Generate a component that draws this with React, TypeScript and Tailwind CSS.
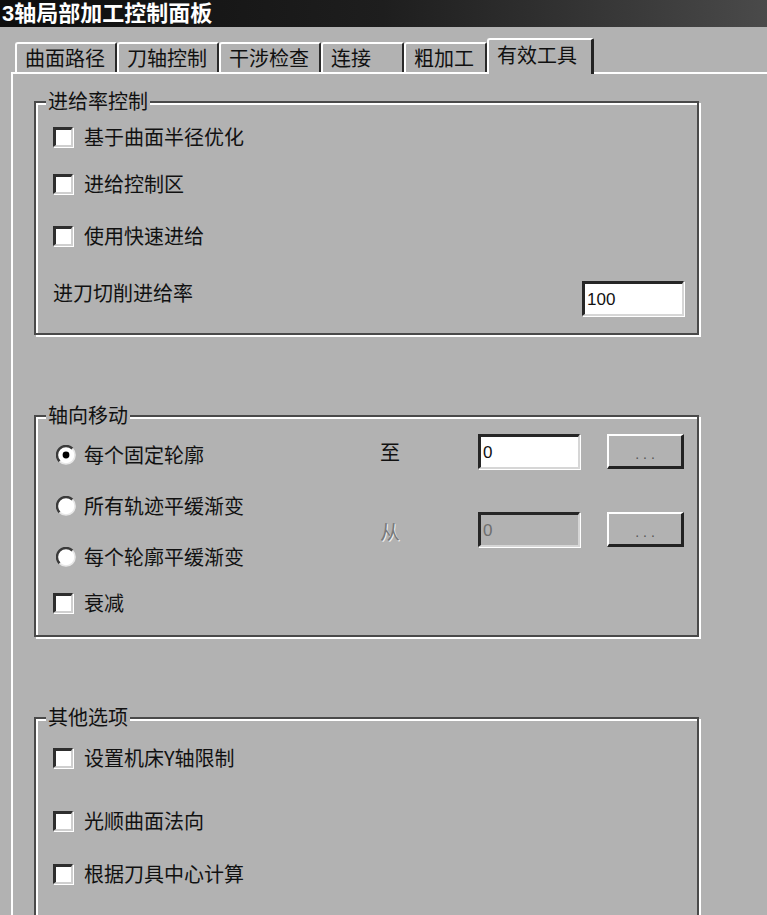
import React from "react";

const CJK = { fontFamily: '"Noto Sans CJK SC", "Noto Sans CJK JP", sans-serif' };
const TITLE = { fontFamily: '"Liberation Sans", "Noto Sans CJK SC", sans-serif' };
const MONO = { fontFamily: '"Liberation Sans", Arial, sans-serif' };

function Checkbox() {
  return (
    <span className="block w-[20px] h-[20px] shrink-0 bg-white border-t-[3px] border-l-[3px] border-t-[#2e2e2e] border-l-[#2e2e2e] border-r-2 border-b-2 border-r-[#cfcfcf] border-b-[#cfcfcf] shadow-[1px_1px_0_#ffffff]" />
  );
}

function Radio({ checked }: { checked?: boolean }) {
  return (
    <svg width="20" height="20" viewBox="0 0 20 20" className="shrink-0">
      <circle cx="10" cy="10" r="9" fill="#ffffff" />
      <path d="M3.6 16.4 A9 9 0 0 1 16.4 3.6" fill="none" stroke="#3a3a3a" strokeWidth="2.4" />
      <path d="M16.4 3.6 A9 9 0 0 1 3.6 16.4" fill="none" stroke="#e8e8e8" strokeWidth="1.6" />
      {checked && <circle cx="10" cy="10" r="3.4" fill="#000000" />}
    </svg>
  );
}

function CheckRow({ label, className = "" }: { label: string; className?: string }) {
  return (
    <div className={"flex items-center h-[24px] " + className}>
      <Checkbox />
      <span className="ml-[11px] text-[20px] leading-[24px] text-[#111] whitespace-nowrap">{label}</span>
    </div>
  );
}

function RadioRow({ label, checked, className = "" }: { label: string; checked?: boolean; className?: string }) {
  return (
    <div className={"flex items-center h-[24px] " + className}>
      <span className="ml-[3px]">
        <Radio checked={checked} />
      </span>
      <span className="ml-[8px] text-[20px] leading-[24px] text-[#111] whitespace-nowrap">{label}</span>
    </div>
  );
}

function Group({ title, children, className = "" }: { title: string; children: React.ReactNode; className?: string }) {
  return (
    <div
      className={
        "relative w-[665px] border-2 border-[#4a4a4a] shadow-[inset_2px_2px_0_#ffffff,2px_2px_0_#ffffff] " + className
      }
    >
      <span className="absolute left-[10px] -top-[14px] px-[2px] bg-[#b2b2b2] text-[20px] leading-[24px] text-[#111] whitespace-nowrap">
        {title}
      </span>
      {children}
    </div>
  );
}

function TextBox({ value, disabled }: { value: string; disabled?: boolean }) {
  return (
    <div
      className={
        "w-[102px] h-[35px] flex items-center pl-[2px] border-t-[3px] border-l-[3px] border-t-[#262626] border-l-[#262626] border-r-2 border-b-2 border-r-[#d6d6d6] border-b-[#d6d6d6] shadow-[1px_1px_0_#ffffff] " +
        (disabled ? "bg-[#b2b2b2] text-[#6e6e6e]" : "bg-white text-[#111]")
      }
      style={MONO}
    >
      <span className="text-[17px] leading-none">{value}</span>
    </div>
  );
}

function DotsButton() {
  return (
    <div className="w-[77px] h-[35px] flex items-end justify-center pb-[4px] bg-[#b2b2b2] border-t-2 border-l-2 border-t-white border-l-white border-r-[3px] border-b-[3px] border-r-[#222] border-b-[#222]">
      <span className="text-[14px] leading-[16px] tracking-[4px] text-[#555] pl-[4px]" style={MONO}>
        ...
      </span>
    </div>
  );
}

const tabs = [
  { label: "曲面路径", w: "w-[102px]" },
  { label: "刀轴控制", w: "w-[102px]" },
  { label: "干涉检查", w: "w-[102px]" },
  { label: "连接", w: "w-[83px]" },
  { label: "粗加工", w: "w-[83px]" },
];

export default function App() {
  return (
    <div className="w-[767px] h-[915px] overflow-hidden bg-[#b2b2b2] flex flex-col" style={CJK}>
      {/* Title bar */}
      <div className="h-[27px] shrink-0 flex items-center pl-[2px] bg-linear-to-r from-[#0e0e0e] via-[#1e1e1e] to-[#4a4a4a]">
        <span className="text-white font-bold text-[22px] leading-none" style={TITLE}>
          3轴局部加工控制面板
        </span>
      </div>

      {/* Tabs row */}
      <div className="h-[45px] shrink-0 flex items-end pl-[15px] relative z-10">
        {tabs.map((t) => (
          <div
            key={t.label}
            className={
              t.w +
              " h-[30px] flex items-center pl-[8px] border-t-2 border-l-2 border-t-white border-l-white border-r-2 border-r-[#2a2a2a] rounded-tl-[3px] rounded-tr-[2px] text-[20px] leading-none text-[#111] whitespace-nowrap"
            }
          >
            {t.label}
          </div>
        ))}
        <div className="w-[107px] h-[36px] -mb-[2px] pb-[4px] flex items-center pl-[8px] bg-[#b2b2b2] border-t-2 border-l-2 border-t-white border-l-white border-r-[3px] border-r-[#222] rounded-tl-[3px] rounded-tr-[2px] text-[20px] leading-none text-[#111] whitespace-nowrap">
          有效工具
        </div>
      </div>

      {/* Panel */}
      <div className="flex-1 ml-[11px] border-l-2 border-t-2 border-white pl-[21px] pt-[27px]">
        <Group title="进给率控制">
          <div className="pl-[17px] pr-[13px] pt-[22px] pb-[17px] flex flex-col">
            <CheckRow label="基于曲面半径优化" />
            <CheckRow label="进给控制区" className="mt-[23px]" />
            <CheckRow label="使用快速进给" className="mt-[28px]" />
            <div className="mt-[33px] flex items-start justify-between">
              <span className="text-[20px] leading-[24px] text-[#111]">进刀切削进给率</span>
              <TextBox value="100" />
            </div>
          </div>
        </Group>

        <Group title="轴向移动" className="mt-[80px]">
          <div className="flex">
            <div className="w-[345px] pl-[17px] pt-[26px] pb-[20px] flex flex-col">
              <RadioRow label="每个固定轮廓" checked />
              <RadioRow label="所有轨迹平缓渐变" className="mt-[27px]" />
              <RadioRow label="每个轮廓平缓渐变" className="mt-[27px]" />
              <CheckRow label="衰减" className="mt-[22px]" />
            </div>
            <div className="flex-1 pt-[16px] pr-[13px] flex flex-col">
              <div className="flex items-center h-[37px]">
                <span className="w-[98px] text-[20px] leading-[24px] text-[#111]">至</span>
                <TextBox value="0" />
                <div className="ml-[27px]">
                  <DotsButton />
                </div>
              </div>
              <div className="flex items-center h-[37px] mt-[41px]">
                <span className="w-[98px] pt-[4px] text-[20px] leading-[24px] text-[#7a7a7a] [text-shadow:1px_1px_0_#f0f0f0]">从</span>
                <TextBox value="0" disabled />
                <div className="ml-[27px]">
                  <DotsButton />
                </div>
              </div>
            </div>
          </div>
        </Group>

        <Group title="其他选项" className="mt-[80px]">
          <div className="pl-[17px] pt-[27px] pb-[60px] flex flex-col">
            <CheckRow label="设置机床Y轴限制" />
            <CheckRow label="光顺曲面法向" className="mt-[39px]" />
            <CheckRow label="根据刀具中心计算" className="mt-[29px]" />
          </div>
        </Group>
      </div>
    </div>
  );
}
